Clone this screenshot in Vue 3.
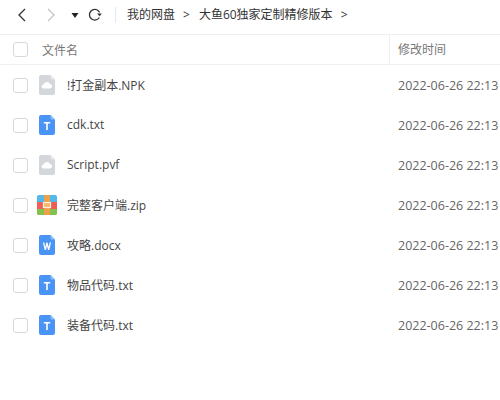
<template>
  <div class="page">
    <div class="toolbar">
      <div class="nav">
        <svg class="arrow" width="9" height="14" viewBox="0 0 9 14"><path d="M8 1 2 7l6 6" fill="none" stroke="#333" stroke-width="1.300" /></svg>
        <svg class="arrow forward" width="9" height="14" viewBox="0 0 9 14"><path d="M1 1l6 6-6 6" fill="none" stroke="#c4c4c4" stroke-width="1.300" /></svg>
        <svg class="caret" width="8" height="5" viewBox="0 0 8 5"><path d="M.5 0h7L4 5z" fill="#222" /></svg>
        <svg class="refresh" width="14" height="14" viewBox="0 0 14 14">
          <path d="M11.300 9.500A5.300 5.300 0 1 1 10.600 3.100L11.600 4.400" fill="none" stroke="#333" stroke-width="1.300" />
          <path d="M9 5.600h4.800L11.600 8.200z" fill="#333" />
        </svg>
      </div>
      <div class="crumbs">
        <span>我的网盘</span>
        <span class="sep">&gt;</span>
        <span class="current">大鱼60独家定制精修版本</span>
        <span class="sep">&gt;</span>
      </div>
    </div>

    <div class="head">
      <div class="check-cell"><span class="check"></span></div>
      <div class="name-col">文件名</div>
      <div class="time-col">修改时间</div>
    </div>

    <div v-for="file in files" :key="file.name" class="row">
      <div class="check-cell"><span class="check"></span></div>
      <div class="icon-cell">
        <svg v-if="file.type === 'zip'" width="20" height="20" viewBox="0 0 20 20">
          <rect width="20" height="20" rx="2.500" fill="#ef5f58" />
          <path d="M2.500 0h15A2.500 2.500 0 0 1 20 2.500V7H0V2.500A2.500 2.500 0 0 1 2.500 0z" fill="#53b9ed" />
          <path d="M0 14h20v3.500a2.500 2.500 0 0 1-2.500 2.500h-15A2.500 2.500 0 0 1 0 17.500z" fill="#84c24e" />
          <rect x="7" width="6" height="20" fill="#eda24a" />
          <rect x="6.500" y="7.500" width="7" height="5" fill="#f5b66e" stroke="#fff3dd" stroke-width="1.200" />
        </svg>
        <svg v-else width="16" height="20" viewBox="0 0 16 20">
          <path d="M2 0h9.500L16 4.500V18a2 2 0 0 1-2 2H2a2 2 0 0 1-2-2V2a2 2 0 0 1 2-2z" :fill="file.type === 'cloud' ? '#d3d6da' : '#4a94f5'" />
          <path d="M11.500 0 16 4.500h-3a1.500 1.500 0 0 1-1.500-1.500z" :fill="file.type === 'cloud' ? '#e6e8ea' : '#8fbdf9'" />
          <path v-if="file.type === 'cloud'" d="M4.700 13.500a2 2 0 0 1-.2-4A3.500 3.500 0 0 1 11 9a2.300 2.300 0 0 1 .3 4.500z" fill="#fff" />
          <path v-if="file.type === 'txt'" d="M4.800 7h6.400v1.500H8.800V15H7.200V8.500H4.800z" fill="#fff" />
          <path v-if="file.type === 'doc'" d="M4 7.500h1.300l1.100 4.600 1-4.600h1.200l1 4.600 1.100-4.600H12L10.300 15H9L8 10.800 7 15H5.700z" fill="#fff" />
        </svg>
      </div>
      <div class="file-name">{{ file.name }}</div>
      <div class="file-time">{{ file.time }}</div>
    </div>
  </div>
</template>

<script setup>
const files = [
  { name: '!打金副本.NPK', type: 'cloud', time: '2022-06-26 22:13' },
  { name: 'cdk.txt', type: 'txt', time: '2022-06-26 22:13' },
  { name: 'Script.pvf', type: 'cloud', time: '2022-06-26 22:13' },
  { name: '完整客户端.zip', type: 'zip', time: '2022-06-26 22:13' },
  { name: '攻略.docx', type: 'doc', time: '2022-06-26 22:13' },
  { name: '物品代码.txt', type: 'txt', time: '2022-06-26 22:13' },
  { name: '装备代码.txt', type: 'txt', time: '2022-06-26 22:13' }
]
</script>

<style>
body {
  overflow: hidden;
  background: #fff;
}
</style>

<style scoped>
.page {
  width: 500px;
  height: 400px;
  overflow: hidden;
  font-family: "Open Sans", "Noto Sans CJK SC", sans-serif;
  color: #444;
  background: #fff;
}

.toolbar {
  height: 30px;
  padding-bottom: 4px;
  display: flex;
  align-items: center;
  border-bottom: 1px solid #f0f0f0;
}

.nav {
  width: 116px;
  height: 16px;
  display: flex;
  align-items: center;
  padding-left: 17px;
  box-sizing: border-box;
  border-right: 1px solid #e4e8ec;
}

.forward {
  margin-left: 21px;
}

.caret {
  margin-left: 15px;
}

.refresh {
  margin-left: 9px;
}

.crumbs {
  display: flex;
  gap: 8px;
  padding-left: 11px;
  font-size: 12px;
  line-height: 16px;
  color: #333;
  white-space: nowrap;
}

.current {
  margin-left: 1px;
}

.head {
  height: 29px;
  display: flex;
  align-items: center;
  font-size: 12px;
  color: #777;
  border-bottom: 1px solid #f0f0f0;
}

.check-cell {
  width: 42px;
  flex: none;
  padding-left: 13px;
  box-sizing: border-box;
  display: flex;
}

.check {
  width: 13px;
  height: 13px;
  border: 1px solid #d8d8d8;
  border-radius: 3px;
  background: #fff;
}

.name-col {
  width: 347px;
  flex: none;
}

.time-col {
  flex: 1;
  height: 29px;
  line-height: 29px;
  padding-left: 8px;
  border-left: 1px solid #f0f0f0;
}

.row {
  height: 40px;
  display: flex;
  align-items: center;
  font-size: 12px;
}

.icon-cell {
  width: 25px;
  flex: none;
  display: flex;
  justify-content: center;
  margin-left: -8px;
  margin-right: 8px;
}

.file-name {
  width: 331px;
  flex: none;
  white-space: nowrap;
  color: #444;
  margin-bottom: 1px;
}

.file-time {
  white-space: nowrap;
  color: #666;
  font-size: 12.500px;
}
</style>
